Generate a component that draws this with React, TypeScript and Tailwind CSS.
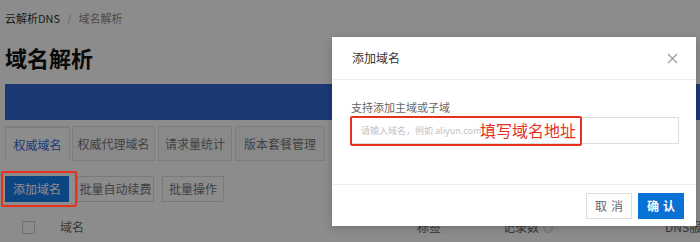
import React from "react";

export default function App() {
  return (
    <div
      className="relative w-[700px] h-[242px] overflow-hidden bg-white"
      style={{ fontFamily: '"Noto Sans CJK SC", "Liberation Sans", sans-serif' }}
    >
      {/* Page content */}
      <div className="pl-[5px]">
        <div className="flex items-center gap-[7px] pt-[10px] h-[26px] text-[11px] leading-[16px]">
          <span className="text-[#333]">云解析DNS</span>
          <span className="text-[#bbb]">/</span>
          <span className="text-[#888]">域名解析</span>
        </div>
        <div className="mt-[17px] h-[28px] text-[22px] leading-[28px] font-bold text-[#111]">域名解析</div>
        <div className="mt-[13px] h-[36px] bg-[#3369d6]" />
        <div className="mt-[6px] flex h-[35px] text-[12px]">
          <div className="w-[65px] flex items-center justify-center border-t-2 border-[#2e66d2] border-x border-[#e4e4e4] text-[#2f6ad6]">权威域名</div>
          <div className="ml-[2px] w-[83px] flex items-center justify-center border border-[#e4e4e4] bg-[#fafafa] text-[#777]">权威代理域名</div>
          <div className="ml-[3px] w-[74px] flex items-center justify-center border border-[#e4e4e4] bg-[#fafafa] text-[#777]">请求量统计</div>
          <div className="ml-[3px] w-[90px] flex items-center justify-center border border-[#e4e4e4] bg-[#fafafa] text-[#777]">版本套餐管理</div>
        </div>
        <div className="mt-[15px] flex h-[26px] gap-[8px] text-[12px]">
          <div className="w-[64px] flex items-center justify-center bg-[#1580ee] text-white">添加域名</div>
          <div className="w-[77px] flex items-center justify-center border border-[#ddd] text-[#777]">批量自动续费</div>
          <div className="w-[62px] flex items-center justify-center border border-[#ddd] text-[#777]">批量操作</div>
        </div>
        <div className="mt-[9px] flex items-center h-[32px] text-[12px] text-[#666] whitespace-nowrap">
          <div className="shrink-0 ml-[17px] w-[13px] h-[13px] border border-[#ccc] bg-white" />
          <span className="shrink-0 ml-[25px]">域名</span>
          <span className="shrink-0 ml-[333px]">标签</span>
          <span className="shrink-0 ml-[62px]">记录数</span>
          <span className="shrink-0 ml-[4px] text-[10px] text-[#aaa]">◎</span>
          <span className="shrink-0 ml-[112px]">DNS服务器</span>
        </div>
      </div>

      {/* Overlay */}
      <div className="absolute inset-0 bg-black/45" />

      {/* Annotation around add button */}
      <div className="absolute left-[1px] top-[171px] w-[76px] h-[36px] border-2 border-[#e8301f] rounded-[2px]" />

      {/* Modal */}
      <div className="absolute left-[332px] top-[37px] w-[364px] h-[189px] bg-white shadow-[0_2px_8px_rgba(0,0,0,0.2)] flex flex-col">
        <div className="h-[43px] flex items-center justify-between pl-[20px] pr-[15px] border-b border-[#eee]">
          <span className="text-[12px] text-[#333]">添加域名</span>
          <svg width="11" height="11" viewBox="0 0 11 11" className="mr-[3px]">
            <path d="M1 1 L10 10 M10 1 L1 10" stroke="#999" strokeWidth="1.1" />
          </svg>
        </div>
        <div className="flex-1 pl-[19px] pr-[17px] pt-[20px]">
          <div className="text-[11px] leading-[14px] text-[#666]">支持添加主域或子域</div>
          <div className="relative mt-[3px] h-[27px] border border-[#ddd] flex items-center pl-[9px] text-[9px] text-[#c2c2c2] whitespace-nowrap">
            请输入域名，例如 aliyun.com
            <div className="absolute left-[-2px] top-[-2px] w-[232px] h-[30px] border-2 border-[#e8301f] rounded-[2px]" />
            <span className="absolute left-[128px] top-[1px] text-[16px] leading-[22px] text-[#e8301f]">填写域名地址</span>
          </div>
        </div>
        <div className="h-[42px] border-t border-[#eee] flex items-start justify-end pt-[8px] pr-[12px] gap-[6px] text-[12px]">
          <div className="w-[46px] h-[26px] flex items-center justify-center border border-[#ddd] text-[#666] tracking-[4px] pl-[4px]">取消</div>
          <div className="w-[46px] h-[26px] flex items-center justify-center bg-[#0a72d4] text-white font-bold tracking-[4px] pl-[4px]">确认</div>
        </div>
      </div>
    </div>
  );
}
